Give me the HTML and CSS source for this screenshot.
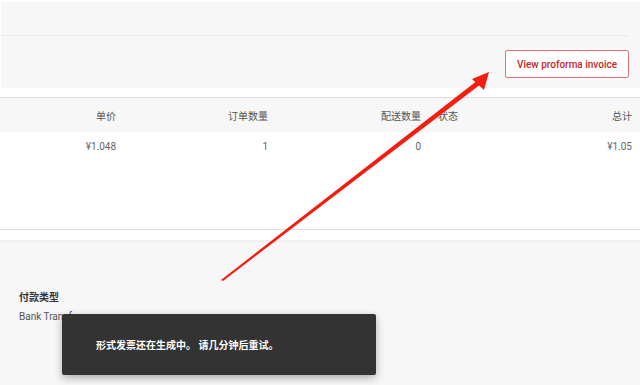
FILE: index.html
```html
<!DOCTYPE html>
<html lang="zh-CN">
<head>
  <meta charset="UTF-8">
  <title>Order</title>
  <link rel="stylesheet" href="styles.css">
</head>
<body>
  <!-- Header panel -->
  <div class="panel">
    <div class="panel-head"></div>
    <div class="panel-actions">
      <button class="btn-outline">View proforma invoice</button>
    </div>
  </div>

  <!-- Order lines -->
  <div class="lines">
    <div class="row head">
      <div class="cell num">单价</div>
      <div class="cell num">订单数量</div>
      <div class="cell num">配送数量</div>
      <div class="cell status">状态</div>
      <div class="cell num">总计</div>
    </div>
    <div class="row body">
      <div class="cell num">¥1.048</div>
      <div class="cell num">1</div>
      <div class="cell num">0</div>
      <div class="cell status"></div>
      <div class="cell num">¥1.05</div>
    </div>
  </div>

  <!-- Payment -->
  <div class="payment">
    <h4>付款类型</h4>
    <p>Bank Transfer</p>
  </div>

  <div class="toast">形式发票还在生成中。 请几分钟后重试。</div>

  <!-- annotation arrow -->
  <svg class="arrow" width="640" height="385" viewBox="0 0 640 385">
    <polygon points="221,280 223,281 481,84 478,80" fill="#f41d10"/>
    <polygon points="489,72 472,79 484,90" fill="#f41d10"/>
  </svg>
</body>
</html>
```

FILE: styles.css
```css
/* General */
body {
  margin: 0;
  background: #fff;
  font-family: Roboto, "Noto Sans CJK SC", sans-serif;
  font-size: 10px;
  color: #555;
  width: 640px;
  height: 385px;
  overflow: hidden;
  position: relative;
}

/* Top panel */
.panel {
  margin-top: 2px;
  margin-left: 1px;
  height: 86px;
  background: #f7f7f7;
}

.panel-head {
  height: 33px;
  margin-right: 11px;
  border-bottom: 1px solid #ebebeb;
}

.panel-actions {
  display: flex;
  justify-content: flex-end;
  padding: 14px 11px 0 0;
}

.btn-outline {
  height: 28px;
  width: 124px;
  padding: 0;
  background: #fff;
  border: 1px solid #e57373;
  border-radius: 2px;
  color: #c62828;
  font-family: Roboto, sans-serif;
  font-weight: 500;
  font-size: 10px;
}

/* Lines table */
.lines {
  margin-top: 9px;
  border-top: 1px solid #dcdcdc;
  border-bottom: 1px solid #dcdcdc;
}

.row {
  display: grid;
  grid-template-columns: 124px 152px 153px 111px 100px;
}

.row.head {
  height: 34px;
  align-items: center;
  background: #f7f7f7;
  color: #555;
}

.row.body {
  height: 97px;
  padding-top: 9px;
  box-sizing: border-box;
  color: #666;
}

.cell {
  padding: 0 8px;
}

.cell.num {
  text-align: right;
}

.cell.status {
  padding-left: 9px;
}

/* Payment */
.payment {
  margin-top: 10px;
  height: 150px;
  box-sizing: border-box;
  padding: 49px 19px 0;
  background: #f7f7f7;
  box-shadow: inset 0 2px 2px rgba(0, 0, 0, 0.03);
}

.payment h4 {
  margin: 0 0 7px;
  font-size: 10px;
  font-weight: 700;
  color: #333;
}

.payment p {
  margin: 0;
  color: #555;
}

/* Snackbar */
.toast {
  position: absolute;
  left: 62px;
  top: 314px;
  width: 280px;
  height: 61px;
  padding: 0 0 0 34px;
  display: flex;
  align-items: center;
  background: #333;
  color: #fff;
  font-weight: 700;
  font-size: 10px;
  border-radius: 2px;
  box-shadow: 0 3px 8px rgba(0, 0, 0, 0.3);
}

.arrow {
  position: absolute;
  left: 0;
  top: 0;
  pointer-events: none;
}
```
